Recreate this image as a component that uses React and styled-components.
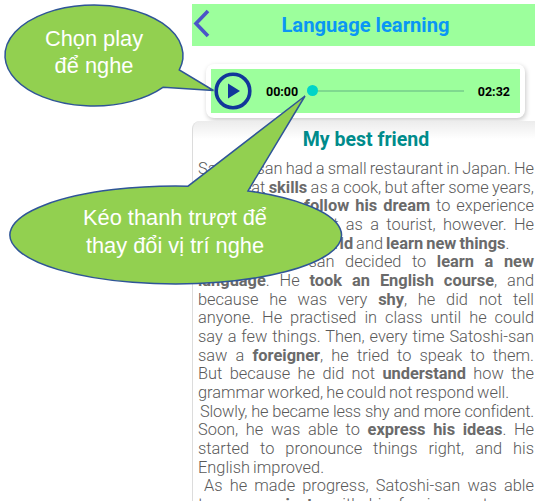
import styled, { createGlobalStyle } from "styled-components";

const GlobalStyle = createGlobalStyle`
  html, body {
    margin: 0;
    padding: 0;
    background: #fff;
  }
`;

const Page = styled.div`
  position: relative;
  width: 546px;
  height: 501px;
  overflow: hidden;
  padding: 4px 11px 0 192px;
  box-sizing: border-box;
  font-family: Roboto, "Liberation Sans", sans-serif;
`;

const Header = styled.header`
  display: flex;
  align-items: center;
  justify-content: center;
  position: relative;
  height: 42px;
  background: #9cff9c;
`;

const BackIcon = styled.svg`
  position: absolute;
  left: 1px;
  top: 5px;
`;

const HeaderTitle = styled.h1`
  margin: 0 0 0 4px;
  font-size: 20.2px;
  font-weight: 700;
  color: #0a96f5;
`;

const PlayerWrap = styled.div`
  margin: 18px 10px 0 14px;
  padding: 5px;
  background: #fff;
  border-radius: 8px;
  box-shadow: 1px 2px 5px rgba(0, 0, 0, 0.22);
`;

const Player = styled.div`
  display: flex;
  align-items: center;
  height: 44px;
  padding: 0 10px 0 3px;
  background: #9cff9c;
`;

const Time = styled.span`
  font-size: 12.5px;
  font-weight: 700;
  color: #000;
`;

const Slider = styled.div`
  position: relative;
  flex: 1;
  height: 2px;
  margin: 0 14px 0 9px;
  background: #7fd98f;
`;

const Thumb = styled.div`
  position: absolute;
  left: 0;
  top: -5px;
  width: 11px;
  height: 11px;
  border-radius: 50%;
  background: #00d4c8;
`;

const Card = styled.article`
  margin-top: 3px;
  padding: 8px 1px 0 5px;
  height: 400px;
  border-left: 1px solid #dcdcdc;
  border-top-left-radius: 8px;
  background: linear-gradient(#ececec, #fff 18px);
`;

const CardTitle = styled.h2`
  margin: 0 0 9px;
  text-align: center;
  font-size: 19.5px;
  line-height: 22px;
  font-weight: 700;
  color: #008b8b;
`;

const Story = styled.div`
  font-size: 16.4px;
  line-height: 18.67px;
  font-weight: 300;
  color: #5a5a5a;

  b {
    font-weight: 700;
    color: #6a6a6a;
  }
`;

// the reference breaks its lines tighter than the font does here, so each line is its own block
const Line = styled.div`
  word-spacing: -1px;
  letter-spacing: ${(p) => (p.$tight ? "-0.2px" : "0")};
  height: 18.67px;
  padding-left: ${(p) => p.$indent || 0}px;
  text-align: left;
  text-align-last: ${(p) => (p.$end ? "left" : "justify")};
`;

const Bubble = styled.svg`
  position: absolute;
  left: 0;
  top: 0;
`;

const BubbleText = styled.div`
  position: absolute;
  left: ${(p) => p.$left}px;
  top: ${(p) => p.$top}px;
  width: ${(p) => p.$width}px;
  text-align: center;
  font-family: "Liberation Sans", Arial, sans-serif;
  font-size: ${(p) => p.$size}px;
  line-height: ${(p) => p.$line}px;
  color: #fff;
`;

export default function App() {
  return (
    <Page>
      <GlobalStyle />
      <Header>
        <BackIcon width="18" height="30" viewBox="0 0 18 30">
          <path d="M15 2 L3 14.5 L15 27" fill="none" stroke="#4b55c8" strokeWidth="3.6" />
        </BackIcon>
        <HeaderTitle>Language learning</HeaderTitle>
      </Header>

      <PlayerWrap>
        <Player>
          <svg width="38" height="38" viewBox="0 0 38 38" style={{ flexShrink: 0, marginRight: 14 }}>
            <circle cx="19" cy="19" r="16.8" fill="none" stroke="#12379a" strokeWidth="3.6" />
            <path d="M14 11.5 L26 19 L14 26.5 Z" fill="#12379a" />
          </svg>
          <Time>00:00</Time>
          <Slider>
            <Thumb />
          </Slider>
          <Time>02:32</Time>
        </Player>
      </PlayerWrap>

      <Card>
        <CardTitle>My best friend</CardTitle>
        <Story>
          <Line>Satoshi-san had a small restaurant in Japan. He</Line>
          <Line>had great <b>skills</b> as a cook, but after some years,</Line>
          <Line>he decided to <b>follow his dream</b> to experience</Line>
          <Line>the world and visit as a tourist, however. He</Line>
          <Line $end>loved to <b>see the world</b> and <b>learn new things</b>.</Line>
          <Line $indent={2}>Then, Satoshi-san decided to <b>learn a new</b></Line>
          <Line><b>language</b>. He <b>took an English course</b>, and</Line>
          <Line>because he was very <b>shy</b>, he did not tell</Line>
          <Line>anyone. He practised in class until he could</Line>
          <Line>say a few things. Then, every time Satoshi-san</Line>
          <Line>saw a <b>foreigner</b>, he tried to speak to them.</Line>
          <Line>But because he did not <b>understand</b> how the</Line>
          <Line $end>grammar worked, he could not respond well.</Line>
          <Line $indent={2} $tight>Slowly, he became less shy and more confident.</Line>
          <Line>Soon, he was able to <b>express his ideas</b>. He</Line>
          <Line>started to pronounce things right, and his</Line>
          <Line $end>English improved.</Line>
          <Line $indent={6}>As he made progress, Satoshi-san was able</Line>
          <Line>to <b>communicate</b> with his foreign customers</Line>
        </Story>
      </Card>

      <Bubble width="546" height="501" viewBox="0 0 546 501">
        <path
          d="M179.3 69.9 A89 50.5 0 1 0 163.3 87.2 L213.5 90.5 Z"
          fill="#92d050"
          stroke="#2f5597"
          strokeWidth="1.5"
        />
        <path
          d="M188 186.13 A165.8 49 0 1 0 248 190.9 L305 96 Z"
          fill="#92d050"
          stroke="#2f5597"
          strokeWidth="1.5"
        />
      </Bubble>
      <BubbleText $left={24} $top={25} $width={140} $size={21.8} $line={27}>
        Chọn play
        <br />
        để nghe
      </BubbleText>
      <BubbleText $left={50} $top={204} $width={250} $size={21.8} $line={28}>
        Kéo thanh trượt để
        <br />
        thay đổi vị trí nghe
      </BubbleText>
    </Page>
  );
}
